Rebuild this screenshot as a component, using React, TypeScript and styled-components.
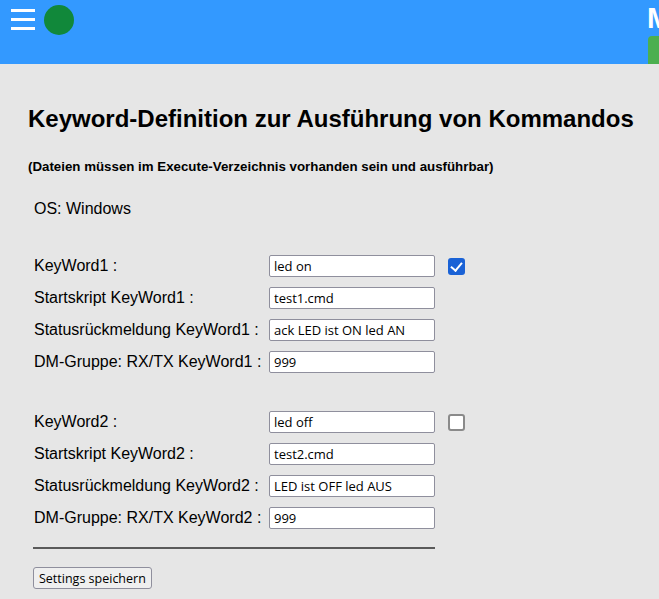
import React from "react";
import styled, { createGlobalStyle } from "styled-components";

const Global = createGlobalStyle`
  html, body { margin: 0; padding: 0; }
  body {
    background: #e6e6e6;
    font-family: "Liberation Sans", Arial, sans-serif;
    color: #000;
    overflow: hidden;
  }
`;

const Page = styled.div`
  width: 659px;
  min-height: 599px;
  background: #e6e6e6;
`;

const Header = styled.header`
  height: 64px;
  background: #3399ff;
  display: flex;
  overflow: hidden;
`;

const NavGroup = styled.div`
  flex: 0 0 calc(100% - 12px);
  display: flex;
  align-items: flex-start;
`;

const Burger = styled.div`
  margin: 9px 0 0 11px;
  width: 24px;
  display: flex;
  flex-direction: column;
  gap: 6px;
`;

const BurgerLine = styled.span`
  display: block;
  height: 3px;
  background: #fff;
`;

const StatusDot = styled.div`
  margin: 5px 0 0 9px;
  width: 30px;
  height: 30px;
  border-radius: 50%;
  background: #11883a;
`;

const Brand = styled.div`
  flex: 0 0 auto;
  display: flex;
  flex-direction: column;
  padding-top: 2px;
`;

const BrandTitle = styled.div`
  color: #fff;
  font-weight: bold;
  font-size: 29px;
  line-height: 32px;
  white-space: nowrap;
`;

const BrandBadge = styled.div`
  margin: 2px 0 0 1px;
  width: 80px;
  height: 28px;
  background: #4caf50;
  border-radius: 4px 0 0 0;
`;

const Main = styled.main`
  padding: 0 0 0 28px;
`;

const Title = styled.h1`
  margin: 41px 0 0;
  font-size: 24px;
  font-weight: bold;
  line-height: 28px;
  white-space: nowrap;
`;

const Note = styled.p`
  margin: 26px 0 0;
  font-size: 13.3px;
  line-height: 15px;
  font-weight: bold;
  white-space: nowrap;
`;

const Form = styled.div`
  padding-left: 6px;
`;

const OsLine = styled.div`
  margin-top: 26px;
  font-size: 16px;
  line-height: 18px;
`;

const Group = styled.div<{ $gap: number }>`
  margin-top: ${(p) => p.$gap}px;
  display: flex;
  flex-direction: column;
`;

const Row = styled.div`
  height: 32px;
  display: flex;
  align-items: center;
`;

const Label = styled.label`
  width: 235px;
  flex: 0 0 235px;
  font-size: 16px;
  line-height: 18px;
  white-space: nowrap;
`;

const TextInput = styled.input`
  box-sizing: border-box;
  width: 166px;
  height: 22px;
  margin: 0;
  padding: 0 3px 0 4px;
  border: 1px solid #8f8f9d;
  border-radius: 2px;
  background: #fff;
  font-family: "Open Sans", "Noto Sans", sans-serif;
  font-size: 13px;
  color: #000;
  outline: none;
`;

const Check = styled.input`
  appearance: none;
  -webkit-appearance: none;
  box-sizing: border-box;
  margin: 0 0 0 13px;
  width: 17px;
  height: 17px;
  border-radius: 3px;
  border: 2px solid #8a8a8a;
  background: #fff;
  position: relative;
  &:checked {
    border: none;
    background: #1a62d6;
  }
  &:checked::after {
    content: "";
    position: absolute;
    left: 5px;
    top: 2px;
    width: 5px;
    height: 9px;
    border: solid #fff;
    border-width: 0 2.5px 2.5px 0;
    transform: rotate(40deg);
  }
`;

const Rule = styled.hr`
  margin: 13px 0 0 -1px;
  width: 402px;
  height: 2px;
  border: none;
  background: #5a5a5a;
`;

const SaveButton = styled.button`
  margin: 18px 0 0 -1px;
  height: 22px;
  padding: 0 5px;
  border: 1px solid #8f8f9d;
  border-radius: 3px;
  background: #efefef;
  font-family: "Open Sans", "Noto Sans", sans-serif;
  font-size: 12.5px;
  color: #000;
`;

type Kw = {
  n: number;
  keyword: string;
  script: string;
  status: string;
  group: string;
  active: boolean;
};

const keywords: Kw[] = [
  { n: 1, keyword: "led on", script: "test1.cmd", status: "ack LED ist ON led AN", group: "999", active: true },
  { n: 2, keyword: "led off", script: "test2.cmd", status: "LED ist OFF led AUS", group: "999", active: false },
];

export default function App() {
  return (
    <Page>
      <Global />
      <Header>
        <NavGroup>
          <Burger>
            <BurgerLine />
            <BurgerLine />
            <BurgerLine />
          </Burger>
          <StatusDot />
        </NavGroup>
        <Brand>
          <BrandTitle>MeshCom</BrandTitle>
          <BrandBadge />
        </Brand>
      </Header>
      <Main>
        <Title>Keyword-Definition zur Ausführung von Kommandos</Title>
        <Note>(Dateien müssen im Execute-Verzeichnis vorhanden sein und ausführbar)</Note>
        <Form>
          <OsLine>OS: Windows</OsLine>
          {keywords.map((k, i) => (
            <Group key={k.n} $gap={i === 0 ? 32 : 28}>
              <Row>
                <Label>KeyWord{k.n} :</Label>
                <TextInput defaultValue={k.keyword} />
                <Check type="checkbox" defaultChecked={k.active} />
              </Row>
              <Row>
                <Label>Startskript KeyWord{k.n} :</Label>
                <TextInput defaultValue={k.script} />
              </Row>
              <Row>
                <Label>Statusrückmeldung KeyWord{k.n} :</Label>
                <TextInput defaultValue={k.status} />
              </Row>
              <Row>
                <Label>DM-Gruppe: RX/TX KeyWord{k.n} :</Label>
                <TextInput defaultValue={k.group} />
              </Row>
            </Group>
          ))}
          <Rule />
          <SaveButton>Settings speichern</SaveButton>
        </Form>
      </Main>
    </Page>
  );
}
